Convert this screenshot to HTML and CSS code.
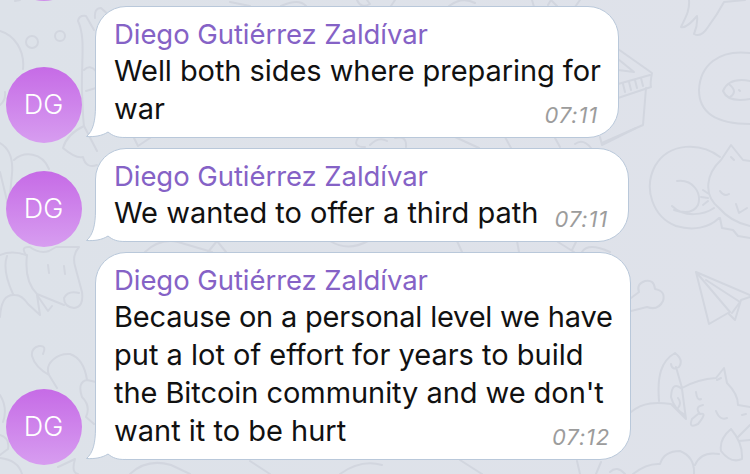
FILE: index.html
```
<!DOCTYPE html>
<html lang="en">
  <head>
    <meta charset="UTF-8" />
    <meta name="viewport" content="width=device-width, initial-scale=1.0" />
    <title>Chat</title>
    <link rel="stylesheet" href="styles.css">
  </head>
  <body>
    <svg class="wallpaper" viewBox="0 0 750 474">
      <!-- planet and stars, top left -->
      <path d="M0 31C14 35 25 50 23 69M0 105Q6 100 5 92M0 143Q14 151 12 174Q11 190 8 205M14 160C24 151 42 152 49 169M0 172Q4 188 8 205" />
      <circle cx="32" cy="42" r="6" />
      <circle cx="60" cy="36" r="5" />
      <path d="M15 1L20 0M78 21Q79 15 86 16L94 30M78 21C86 38 81 62 82 92C83 112 83 120 84 126Q67 134 63 148Q76 159 83 157Q86 169 97 165M95 18Q94 8 101 8L112 18M84 70Q90 64 96 71M86 91L96 88M84 126L97 151" />
      <!-- dog -->
      <path d="M0 255Q12 250 26 255Q20 246 30 247Q39 254 49 251L56 247L79 247Q72 255 75 266L82 292Q84 307 74 308Q64 307 64 298Q68 290 79 293M27 255C25 272 28 285 37 294L64 305M0 317C1 302 5 294 15 295Q22 295 28 304L40 315L37 295L48 311L52 306M7 256Q2 270 13 294" />
      <path d="M48 265L49 273M64 266L65 274" />
      <!-- mouse -->
      <path d="M43 354Q47 345 39 346Q31 348 32 356Q35 367 49 375C44 363 58 353 70 354Q84 359 87 380Q77 382 82 397Q91 406 86 417L94 424M49 375L57 388M87 380L96 382M0 395Q8 408 3 422M0 435Q10 438 8 449L0 455M58 467Q67 463 75 459Q71 473 78 474M0 458Q18 460 22 474" />
      <!-- strips between the bubbles -->
      <path d="M134 138L138 146L150 138M358 138Q352 147 365 147M370 145Q379 136 387 141M395 138Q407 135 406 147M455 137L479 148M505 137L511 148M555 138L560 147M575 144Q583 138 591 148M600 137L602 145L636 128M145 252Q160 238 178 242L212 252M208 252L217 241L226 252M330 241Q348 252 368 241M457 241L462 252M517 241L519 252M558 242L574 252M572 250L576 242M582 252Q588 242 610 252" />
      <path d="M230 2L250 6M281 6Q299-2 306 6M357 0Q361 9 370 4L367 0M391 6L395 0M449 6Q462-4 475 3M532 0L534 7M548 5L551 0L557 6M575 7L580 0M130 474Q147 458 171 465L190 474M250 461L270 474M340 474Q361 459 382 465M460 460L482 474" />
      <!-- fish tail -->
      <path d="M689 0C690 11 685 18 681 27Q686 29 697 16Q698 25 694 34Q701 38 708 27Q717 15 724 2L745 0" />
      <!-- milk box -->
      <path d="M618 49L652 73Q650 83 651 87L618 98M618 84L650 75M646 88L643 125L602 143M618 59L634 72L618 70M623 84L625 92M629 82L631 90M635 80L637 88M641 78L643 86M616 80L617 93" />
      <!-- doughnut -->
      <path d="M750 53C718 49 700 66 699 90C699 114 719 124 750 124M750 81Q729 77 723 91Q728 103 750 99M730 85Q738 92 730 97M739 90L740 91" />
      <!-- sleeping cat -->
      <path d="M720 157C701 142 669 142 655 166C643 189 653 217 676 226C693 231 709 228 719 218M677 181C693 179 702 193 698 205Q692 216 674 210M672 206C684 218 704 215 714 208M721 160L731 145L743 160L750 161M721 160C707 173 702 194 719 208Q731 222 750 226M731 157L734 160M720 191Q724 197 729 194M703 190L709 194M701 197L708 198M703 205L708 201M736 204L739 213L747 208M720 218L722 228L733 230L738 236L750 238" />
      <!-- bone -->
      <path d="M631 298L639 292Q636 284 645 281Q654 279 655 289Q666 291 663 301Q658 311 647 307L631 311" />
      <!-- paper plane -->
      <path d="M696 272L750 295M696 272L709 324L728 313L735 320L741 300L750 297M696 272L730 312M706 280L740 302L732 313" />
      <!-- party cat -->
      <path d="M631 412C643 402 657 402 671 404L686 419L682 389Q672 380 671 397Q674 409 685 415M659 401C657 376 661 361 675 353Q684 360 679 367Q672 371 671 364M676 367L682 388Q698 379 716 378L724 368L727 383Q738 394 738 405L750 407M717 380L721 378M696 392Q697 401 701 399M703 405Q694 407 700 414Q708 412 698 424Q688 429 692 419L698 414M716 411Q720 421 727 418M742 415L746 414M737 438L750 425M739 441L750 440M731 429Q719 439 721 451Q731 464 742 459Q743 443 731 429M678 398Q682 403 678 408M633 474Q647 463 660 464Q664 451 680 451Q695 457 694 474M695 465Q701 451 719 454M577 461L580 474M596 474L601 462M610 472Q617 465 625 474" />
    </svg>

    <div class="avatar-peek"></div>

    <main class="chat">
      <div class="message">
        <div class="avatar">DG</div>
        <div class="bubble first">
          <svg class="tail" viewBox="0 0 42 34">
            <path d="M10.5 2C10.5 17 8 27 1.5 32.5C9 33 17 32 23 28C28 32 32 33.5 40 33.5V2Z" fill="#fff" />
            <path d="M10.5 2C10.5 17 8 27 1.5 32.5C9 33 17 32 23 28C28 32 32 33.5 40 33.5" class="tail-line" />
          </svg>
          <h2 class="name">Diego Gutiérrez Zaldívar</h2>
          <p class="text"><span class="snug">Well both sides where preparing for</span><br />war</p>
          <time class="time">07:11</time>
        </div>
      </div>

      <div class="message">
        <div class="avatar">DG</div>
        <div class="bubble second">
          <svg class="tail" viewBox="0 0 42 34">
            <path d="M10.5 2C10.5 17 8 27 1.5 32.5C9 33 17 32 23 28C28 32 32 33.5 40 33.5V2Z" fill="#fff" />
            <path d="M10.5 2C10.5 17 8 27 1.5 32.5C9 33 17 32 23 28C28 32 32 33.5 40 33.5" class="tail-line" />
          </svg>
          <h2 class="name">Diego Gutiérrez Zaldívar</h2>
          <p class="text">We wanted to offer a third path</p>
          <time class="time">07:11</time>
        </div>
      </div>

      <div class="message">
        <div class="avatar">DG</div>
        <div class="bubble third">
          <svg class="tail" viewBox="0 0 42 34">
            <path d="M10.5 2C10.5 17 8 27 1.5 32.5C9 33 17 32 23 28C28 32 32 33.5 40 33.5V2Z" fill="#fff" />
            <path d="M10.5 2C10.5 17 8 27 1.5 32.5C9 33 17 32 23 28C28 32 32 33.5 40 33.5" class="tail-line" />
          </svg>
          <h2 class="name">Diego Gutiérrez Zaldívar</h2>
          <p class="text"><span class="tight">Because on a personal level we have</span><br />put a lot of effort for years to build<br /><span class="snug">the Bitcoin community and we don't</span><br />want it to be hurt</p>
          <time class="time">07:12</time>
        </div>
      </div>
    </main>
  </body>
</html>
```
FILE: styles.css
```
* {
  margin: 0;
  padding: 0;
  box-sizing: border-box;
}

body {
  height: 474px;
  background: linear-gradient(90deg, #dde2e9, #dfe2ea);
  font-family: Inter, "Liberation Sans", sans-serif;
  position: relative;
  overflow: hidden;
}

.wallpaper {
  position: absolute;
  top: 0;
  left: 0;
  width: 750px;
  height: 474px;
  fill: none;
  stroke: #d2d6df;
  stroke-width: 2;
  stroke-linecap: round;
  stroke-linejoin: round;
}

/* bottom edge of the avatar scrolled off the top */
.avatar-peek {
  position: absolute;
  top: -75px;
  left: 6px;
  width: 76px;
  height: 76px;
  border-radius: 50%;
  background: #d08fea;
}

.chat {
  position: relative;
  display: flex;
  flex-direction: column;
  gap: 10px;
  padding: 6px 0 0 6px;
}

.message {
  display: flex;
  align-items: flex-end;
  gap: 13px;
}

.avatar {
  width: 76px;
  height: 76px;
  margin-bottom: -5px;
  border-radius: 50%;
  background: linear-gradient(#c66be6, #d79df0);
  color: #fff;
  font-size: 27px;
  font-weight: 300;
  line-height: 76px;
  text-align: center;
  text-indent: -1px;
}

.bubble {
  position: relative;
  background: #fff;
  border: 1px solid #b9c8da;
  border-radius: 31px;
  padding: 10px 18px 8px;
}

.first {
  width: 524px;
  height: 132px;
}

.second {
  width: 534px;
  height: 94px;
}

.third {
  width: 536px;
  height: 208px;
}

.tail {
  position: absolute;
  left: -11px;
  bottom: -1px;
  width: 42px;
  height: 34px;
  fill: none;
}

.tail-line {
  stroke: #b9c8da;
  stroke-width: 1;
}

.name {
  position: relative;
  color: #8562c6;
  font-size: 27.5px;
  font-weight: 400;
  line-height: 35px;
  letter-spacing: -0.06px;
  white-space: nowrap;
}

.text {
  position: relative;
  color: #111;
  font-size: 29px;
  font-weight: 400;
  line-height: 38px;
  white-space: nowrap;
}

.snug {
  letter-spacing: -0.06px;
}

.tight {
  letter-spacing: -0.2px;
}

.time {
  position: absolute;
  right: 20px;
  bottom: 9px;
  color: #9c9c9c;
  font-size: 22px;
  font-style: italic;
  font-weight: 400;
  line-height: 26px;
  letter-spacing: 0.8px;
}
```
